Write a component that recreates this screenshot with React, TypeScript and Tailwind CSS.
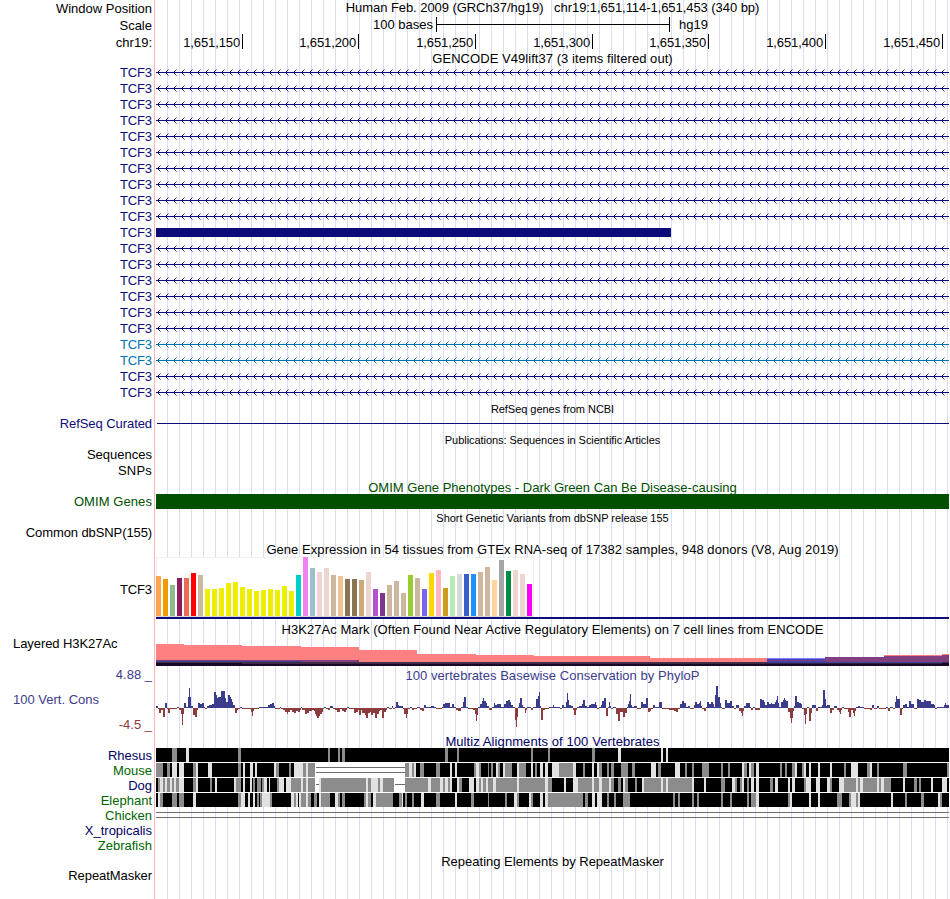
import React from "react";

type Run = [number, number, number];
type Shade = [number, number, string];

// All genomic marks are stored in thirds of a pixel, relative to each panel's own offset.
const px = (z: number) => Math.round(z / 3);

const NAVY = "#0c0c78";
const BLUE = "#3c3c8c";
const GREEN = "#005000";

const geneColors: string[] = Array.from({ length: 21 }, (_, i) =>
  i === 17 || i === 18 ? "#0072b2" : NAVY
);

const tissues: [number, string][] = [
  [108, "#ffa54f"], [117, "#ee9a00"], [135, "#8fbc8f"], [114, "#8b1c62"], [114, "#ee6a50"],
  [99, "#ff0000"], [105, "#cdb79e"], [147, "#eeee00"], [147, "#eeee00"], [144, "#eeee00"],
  [129, "#eeee00"], [126, "#eeee00"], [141, "#eeee00"], [147, "#eeee00"], [153, "#eeee00"],
  [150, "#eeee00"], [147, "#eeee00"], [150, "#eeee00"], [138, "#eeee00"], [153, "#eeee00"],
  [105, "#00cdcd"], [52, "#ee82ee"], [84, "#9ac0cd"], [96, "#eed5d2"], [84, "#eed5d2"],
  [105, "#cdb79e"], [108, "#eec591"], [117, "#8b7355"], [117, "#8b7355"], [120, "#cdaa7d"],
  [96, "#eed5d2"], [147, "#b452cd"], [159, "#7a378b"], [135, "#cdb79e"], [123, "#cdb79e"],
  [159, "#cdb79e"], [105, "#9acd32"], [114, "#cdb79e"], [147, "#7a67ee"], [99, "#ffd700"],
  [90, "#ffb6c1"], [144, "#cd9b1d"], [108, "#b4eeb4"], [102, "#d9d9d9"], [102, "#3a5fcd"],
  [102, "#1e90ff"], [96, "#cdb79e"], [81, "#cdb79e"], [120, "#ffd39b"], [60, "#a6a6a6"],
  [93, "#008b45"], [90, "#eed5d2"], [102, "#eed5d2"], [132, "#ff00ff"],
];

const phyloP: { offset: number; runs: Run[] }[] = [
  {
    offset: -18,
    runs: [
      [18,24,6],[24,27,-4],[27,33,-15],[33,39,-6],[39,45,-27],[45,51,15],[51,54,-3],[54,60,-15],[60,81,-4],[81,87,3],
      [87,93,-6],[93,96,-18],[96,99,-51],[99,102,-18],[102,108,15],[108,114,3],[114,117,33],[117,120,60],[120,123,33],
      [123,129,6],[129,135,-21],[135,141,-27],[141,144,-6],[144,150,15],[150,156,12],[156,162,15],[162,165,4],
      [165,171,-3],[171,177,6],[177,186,9],[186,192,12],[192,198,48],[198,201,39],[201,204,30],[204,213,33],
      [213,225,51],[225,228,30],[228,234,18],[234,240,39],[240,243,33],[243,246,27],[246,249,18],[249,255,9],
      [255,261,-15],[261,264,-6],[264,270,-3],[270,276,3],[276,303,-3],[303,306,-12],[306,309,-24],[309,312,-9],
      [312,327,-3],[327,354,3],[354,360,9],[360,366,12],[366,372,15],[372,375,6],[375,390,-3],[390,393,3],
      [393,399,-3],[399,405,-6],[405,411,-12],[411,414,-18],[414,420,-12],[420,426,-6],[426,432,-12],[432,438,-15],
      [438,444,-9],[444,450,-12],[450,453,-6],[453,456,3],[456,465,-6],[465,471,-18],[471,477,-15],[477,486,-9],
      [486,492,-6],[492,495,-9],[495,498,-18],[498,501,-24],[501,507,-30],[507,510,-24],[510,516,-18],[516,519,-12],
      [519,522,-3],[522,528,3],[528,534,-3],[534,540,-6],[540,549,5],[549,555,-3],[555,560,-6],[560,570,-12],
      [570,576,-4],[576,582,-9],[582,588,-12],[588,591,-6],[591,597,3],[597,612,-4],[612,618,-15],[618,624,-12],
      [624,627,-6],[627,633,-21],[633,636,-6],[636,645,-15],[645,648,-21],[648,654,-30],[654,660,-15],[660,663,-12],
      [663,669,-21],[669,675,-15],[675,681,-29],[681,687,-18],[687,690,-9],[690,696,-6],[696,702,-30],[702,708,-12],
      [708,711,-6],[711,717,3],[717,726,-3],[726,729,6],[729,735,-3],[735,738,3],[738,744,18],[744,747,9],
      [747,753,5],[753,759,6],[759,762,-3],[762,768,-18],[768,771,-30],[771,774,-18],[774,780,-4],[780,786,3],
      [786,792,-6],[792,801,-4],[801,810,3],
    ],
  },
  {
    offset: 792,
    runs: [
      [0,6,-6],[6,12,-9],[12,18,9],[18,24,3],[24,33,3],[33,42,6],[42,48,3],[48,66,-3],[66,69,3],[69,75,12],[75,90,15],
      [90,96,3],[96,102,12],[102,108,3],[108,114,-5],[114,123,-8],[123,129,3],[129,132,18],[132,138,33],[138,144,3],
      [144,150,-4],[150,159,-3],[159,165,-5],[165,168,-18],[168,171,-39],[171,174,-21],[174,180,3],[180,186,12],
      [186,189,21],[189,192,30],[192,198,21],[198,201,15],[201,207,6],[207,216,-6],[216,222,3],[222,225,15],
      [225,231,9],[231,243,12],[243,252,3],[252,258,12],[258,264,21],[264,270,24],[270,273,18],[273,279,9],
      [279,285,3],[285,288,-36],[288,291,-57],[291,294,-27],[294,297,3],[297,300,15],[300,306,30],[306,309,9],
      [309,315,4],[315,318,-15],[318,321,-6],[321,333,3],[333,339,-6],[339,348,4],[348,354,27],[354,357,36],
      [357,360,48],[360,363,6],[363,369,-36],[369,375,-6],[375,387,-3],[387,399,3],[399,402,9],[402,420,3],
      [420,426,-4],[426,432,8],[432,438,3],[438,441,18],[441,444,45],[444,447,24],[447,453,8],[453,459,6],
      [459,462,-6],[462,468,-21],[468,471,-6],[471,477,4],[477,486,6],[486,489,12],[489,495,24],[495,501,6],
      [501,507,3],[507,513,9],[513,525,12],[525,528,18],[528,531,9],[531,537,-3],[537,543,3],[543,546,9],
      [546,552,21],[552,558,30],[558,564,-24],[564,567,3],[567,570,18],[570,573,6],[573,579,-3],[579,588,3],
      [588,594,-18],[594,600,-39],[600,609,-12],[609,615,-27],[615,621,-15],[621,624,3],[624,627,12],[627,630,21],
      [630,633,42],[633,636,9],[636,642,3],[642,651,6],[651,663,-3],[663,669,18],[669,678,12],[678,684,30],
      [684,690,-12],[690,693,-8],[693,699,-3],[699,705,9],[705,711,3],[711,717,4],[717,726,18],[726,747,-3],
      [747,753,-5],[753,762,-6],[762,768,-9],[768,774,-12],[774,780,-3],[780,786,12],[786,792,21],[792,798,15],
      [798,804,3],[804,810,5],
    ],
  },
  {
    offset: 1602,
    runs: [
      [0,12,-3],[12,15,9],[15,21,18],[21,27,12],[27,30,15],[30,33,21],[33,36,6],[36,42,-3],[42,48,-9],[48,51,3],
      [51,57,18],[57,63,12],[63,69,18],[69,72,12],[72,75,3],[75,78,39],[78,84,66],[84,90,33],[90,93,15],[93,96,3],
      [96,105,-3],[105,111,24],[111,120,15],[120,126,21],[126,132,6],[132,138,-3],[138,147,9],[147,153,-9],
      [153,156,-15],[156,159,-24],[159,162,-9],[162,168,6],[168,180,15],[180,183,3],[183,189,-6],[189,195,3],
      [195,210,-6],[210,216,27],[216,222,24],[222,225,18],[225,231,9],[231,237,18],[237,243,12],[243,246,15],
      [246,255,12],[255,258,18],[258,261,24],[261,264,36],[264,267,15],[267,273,3],[273,279,18],[279,282,24],
      [282,285,30],[285,288,24],[288,294,21],[294,300,-12],[300,303,-30],[303,306,-45],[306,309,-30],[309,312,-9],
      [312,315,6],[315,318,36],[318,321,36],[321,327,18],[327,333,15],[333,336,12],[336,345,-3],[342,345,-21],
      [345,348,-48],[348,351,-18],[351,357,3],[357,363,-39],[363,366,-15],[366,378,9],[378,384,-9],[384,396,3],
      [396,399,9],[399,405,54],[405,408,27],[408,411,6],[411,420,9],[420,426,-15],[426,432,-5],[432,441,6],
      [441,447,-6],[447,450,-12],[450,453,-18],[453,456,-6],[456,462,3],[462,474,-3],[474,477,-12],[477,483,-27],
      [483,489,-6],[489,492,-15],[492,495,-24],[495,498,-9],[498,504,3],[504,510,6],[510,522,3],[522,540,-3],
      [540,546,-5],[546,552,9],[552,561,-3],[561,567,6],[567,588,-3],[588,594,3],[594,600,-8],[600,609,3],
      [609,615,-3],[615,618,18],[618,621,36],[621,630,27],[630,636,-21],[636,639,-3],[639,645,9],[645,651,12],
      [651,657,3],[657,663,21],[663,672,12],[672,681,-3],[681,687,27],[687,693,24],[693,702,18],[702,708,24],
      [708,723,21],[723,732,12],[732,735,9],[735,741,-3],[741,762,3],[762,765,9],[765,768,15],[768,777,9],
    ],
  },
];

const tone: Record<string, string> = { g: "#8c8c8c", w: "#e1e1e1", k: "#000000", b: "#ffffff" };

const alignments: { name: string; parts: { offset: number; marks: Shade[] }[] }[] = [
  {
    name: "Rhesus",
    parts: [
      { offset: -18, marks: [[66,81,"g"],[108,117,"w"],[264,273,"g"],[534,540,"g"],[564,570,"g"],[576,585,"g"]] },
      { offset: 792, marks: [[75,84,"g"],[111,117,"g"],[333,339,"g"],[384,390,"g"],[516,525,"g"],[594,603,"w"],[723,729,"w"],[738,744,"w"]] },
    ],
  },
  {
    name: "Mouse",
    parts: [
      { offset: -18, marks: [
        [18,39,"g"],[51,60,"g"],[66,81,"w"],[87,102,"w"],[129,138,"g"],[138,144,"w"],[174,186,"w"],[264,273,"g"],
        [279,285,"w"],[300,309,"w"],[315,321,"w"],[372,378,"w"],[378,387,"g"],[417,423,"g"],[432,459,"w"],[459,468,"g"],
        [468,474,"w"],[474,495,"g"],[495,765,"b"],[765,777,"g"],[777,786,"w"],[786,792,"g"],[792,798,"w"],
      ] },
      { offset: 792, marks: [
        [0,12,"g"],[48,60,"g"],[90,96,"w"],[105,111,"w"],[162,168,"g"],[168,177,"w"],[177,183,"g"],[204,207,"g"],
        [213,219,"g"],[228,234,"w"],[234,240,"g"],[249,255,"w"],[255,276,"g"],[291,297,"w"],[297,318,"g"],[333,339,"w"],
        [345,351,"g"],[360,369,"w"],[375,384,"w"],[396,417,"w"],[417,459,"g"],[459,468,"w"],[489,495,"g"],[516,522,"w"],
        [531,537,"w"],[537,546,"g"],[561,567,"g"],[573,582,"g"],[603,624,"g"],[636,645,"g"],[693,708,"w"],[714,723,"g"],
        [765,780,"w"],[795,801,"g"],
      ] },
      { offset: 1602, marks: [
        [6,12,"g"],[36,57,"g"],[93,99,"g"],[114,120,"g"],[156,162,"w"],[162,171,"g"],[177,183,"w"],[183,192,"g"],
        [198,207,"w"],[270,276,"g"],[285,291,"g"],[306,315,"g"],[315,321,"w"],[336,342,"g"],[342,348,"w"],[357,363,"w"],
        [384,390,"w"],[420,426,"w"],[462,468,"g"],[483,504,"w"],[531,540,"g"],[540,546,"w"],[561,567,"g"],[639,651,"g"],
        [771,777,"g"],
      ] },
    ],
  },
  {
    name: "Dog",
    parts: [
      { offset: -18, marks: [
        [24,30,"g"],[30,39,"w"],[39,45,"g"],[45,51,"w"],[51,60,"g"],[60,66,"w"],[66,72,"g"],[72,78,"w"],[78,87,"g"],
        [87,102,"w"],[129,138,"g"],[138,144,"w"],[180,186,"g"],[195,201,"w"],[252,258,"w"],[258,273,"g"],[279,285,"w"],
        [300,306,"w"],[309,315,"g"],[321,333,"g"],[336,342,"g"],[342,351,"w"],[357,360,"w"],[381,387,"g"],[387,402,"w"],
        [408,423,"w"],[423,453,"g"],[453,459,"w"],[459,468,"g"],[468,474,"w"],[474,495,"g"],[495,507,"b"],[507,513,"w"],
        [513,648,"g"],[648,654,"w"],[654,663,"g"],[663,684,"w"],[684,690,"g"],[690,699,"w"],[699,732,"g"],[732,765,"b"],
        [765,810,"g"],
      ] },
      { offset: 792, marks: [
        [0,24,"g"],[24,33,"w"],[33,60,"g"],[60,69,"w"],[69,75,"g"],[75,84,"w"],[84,90,"g"],[90,96,"w"],[111,117,"w"],
        [117,126,"g"],[147,162,"w"],[168,177,"w"],[177,183,"g"],[183,189,"w"],[189,198,"g"],[198,204,"w"],[204,219,"g"],
        [219,228,"w"],[228,291,"g"],[291,297,"w"],[297,375,"g"],[375,384,"w"],[384,396,"g"],[432,438,"w"],[459,474,"w"],
        [474,516,"g"],[516,522,"w"],[522,537,"g"],[537,546,"w"],[546,567,"g"],[567,573,"w"],[573,582,"g"],[594,603,"g"],
        [609,615,"w"],[615,624,"g"],[645,651,"g"],[666,672,"w"],[672,723,"g"],[723,729,"w"],[729,738,"g"],[738,744,"w"],
        [744,810,"g"],
      ] },
      { offset: 1602, marks: [
        [0,6,"g"],[6,12,"w"],[42,48,"w"],[93,105,"g"],[126,135,"w"],[135,141,"g"],[150,156,"g"],[156,162,"w"],
        [171,177,"g"],[183,192,"w"],[198,207,"w"],[240,249,"g"],[255,264,"w"],[294,300,"w"],[306,315,"w"],[342,348,"g"],
        [348,363,"w"],[378,390,"w"],[411,420,"w"],[420,426,"g"],[447,462,"w"],[462,498,"g"],[498,504,"w"],[504,510,"g"],
        [510,519,"w"],[519,561,"g"],[561,567,"w"],[567,573,"g"],[573,582,"w"],[582,603,"g"],[639,645,"w"],[672,681,"g"],
        [687,693,"g"],[723,729,"w"],[756,771,"w"],
      ] },
    ],
  },
  {
    name: "Elephant",
    parts: [
      { offset: -18, marks: [
        [24,30,"w"],[30,39,"g"],[66,81,"g"],[87,102,"g"],[129,138,"w"],[264,273,"g"],[273,285,"w"],[294,300,"w"],
        [309,315,"w"],[321,327,"g"],[330,336,"g"],[336,360,"w"],[360,366,"g"],[423,432,"w"],[432,438,"g"],[438,444,"w"],[447,453,"w"],
        [453,468,"g"],[468,474,"w"],[474,483,"g"],[492,500,"g"],[507,513,"w"],[513,540,"g"],[555,564,"w"],[564,570,"g"],
        [576,585,"g"],[642,648,"g"],[648,654,"w"],[654,663,"g"],[669,678,"w"],[678,729,"g"],[747,756,"g"],[756,759,"w"],
        [765,771,"g"],[786,792,"g"],
      ] },
      { offset: 792, marks: [
        [3,12,"w"],[48,60,"g"],[105,111,"w"],[153,162,"g"],[204,207,"g"],[255,261,"g"],[282,291,"w"],[291,297,"g"],
        [327,333,"w"],[333,339,"g"],[360,369,"w"],[375,384,"w"],[384,489,"g"],[495,504,"g"],[516,525,"w"],[531,537,"w"],
        [537,546,"w"],[561,567,"g"],[582,588,"g"],[609,630,"g"],[759,765,"g"],[774,780,"g"],
      ] },
      { offset: 1602, marks: [
        [6,12,"g"],[21,27,"g"],[93,99,"g"],[120,126,"g"],[171,177,"g"],[183,198,"g"],[198,207,"w"],[294,300,"g"],
        [300,306,"w"],[357,363,"w"],[384,390,"w"],[441,456,"g"],[477,483,"g"],[483,498,"w"],[498,504,"g"],[504,510,"w"],
        [603,609,"w"],[645,651,"g"],[693,702,"g"],[744,750,"w"],[750,756,"g"],
      ] },
    ],
  },
];

// [x, y, width, height, fill] inside the 793x30 histone panel
const histone: [number, number, number, number, string][] = [
  [0, 7, 28, 18, "#ff8080"], [28, 8, 58, 17, "#ff8080"], [86, 9, 59, 16, "#ff8080"],
  [145, 10, 58, 15, "#ff8080"], [203, 13, 58, 12, "#ff8080"], [261, 17, 59, 8, "#ff8080"],
  [320, 18, 58, 7, "#ff8080"], [378, 19, 116, 6, "#ff8080"], [494, 21, 117, 4, "#ff8080"],
  [611, 21, 58, 1, "#8080ff"], [611, 22, 58, 1, "#4040c0"], [611, 23, 58, 2, "#804080"],
  [669, 20, 59, 5, "#804080"], [728, 18, 58, 1, "#ff8080"], [728, 19, 58, 6, "#804080"],
  [786, 17, 7, 1, "#ff8080"], [786, 18, 7, 7, "#804080"],
  [0, 23, 203, 1, "#804080"], [0, 24, 145, 1, "#404090"], [145, 24, 58, 1, "#804080"],
  [0, 25, 793, 1, "#403050"], [611, 24, 58, 2, "#4040a0"], [669, 25, 117, 1, "#404090"],
  [0, 26, 793, 3, "#180828"], [86, 26, 525, 1, "#402840"], [611, 26, 175, 1, "#302040"],
];

type TextRow = { text: string; h: string; color?: string; ls?: string };

// Even top padding nudges the centred line down by half of it.
function Label({ text, h, color = "#000000", left = false, ls = "", drop = "pt-0" }: TextRow & { left?: boolean; drop?: string }) {
  return (
    <div className={`${h} ${ls} ${drop} flex items-center whitespace-pre ${left ? "pl-[13px]" : "justify-end pr-[2px]"}`} style={{ color }}>
      {text}
    </div>
  );
}

function Title({ text, h, color = "#000000", small = false, ls = "", drop = "pt-0" }: TextRow & { small?: boolean; drop?: string }) {
  return (
    <div className={`${h} ${small ? "text-[11px]" : ""} ${ls} ${drop} flex items-center justify-center whitespace-pre`} style={{ color }}>
      {text}
    </div>
  );
}

function GeneRows() {
  const arrows = Array.from({ length: 99 }, (_, i) => 1 + i * 8);
  const dots = (y: number, d: number) =>
    arrows.map((x) => `M${x + d} ${y - d}h1v1h-1zM${x + d} ${y + d}h1v1h-1z`).join("");
  return (
    <svg width="793" height="336" className="block" shapeRendering="crispEdges">
      {geneColors.map((c, r) => {
        const y = r * 16 + 8;
        if (r === 10) return <rect key={r} x="0" y={y - 4} width="515" height="9" fill={c} />;
        return (
          <g key={r} fill={c}>
            <rect x="0" y={y} width="793" height="1" />
            <path d={dots(y, 1)} />
            <path d={dots(y, 2)} fillOpacity="0.85" />
            <path d={dots(y, 3)} fillOpacity="0.5" />
          </g>
        );
      })}
    </svg>
  );
}

function Expression() {
  return (
    <svg width="793" height="64" className="block" shapeRendering="crispEdges">
      <rect x="0" y="0" width="378" height="60" fill="#f0f0f0" />
      <rect x="1" y="1" width="376" height="58" fill="#ffffff" />
      {tissues.map(([top, fill], i) => {
        const y = Math.round(top / 3) - 17;
        return <rect key={i} x={i * 7} y={y} width="5" height={59 - y} fill={fill} />;
      })}
      <rect x="0" y="59" width="377" height="1" fill="#d8d8d8" />
      <rect x="0" y="60" width="793" height="2" fill={NAVY} />
    </svg>
  );
}

function Conservation() {
  return (
    <svg width="793" height="50" className="block" shapeRendering="crispEdges">
      {phyloP.map(({ offset, runs }) =>
        runs.map(([a, b, v], i) => {
          const x = px(a + offset);
          const h = Math.max(1, px(Math.abs(v)));
          return (
            <rect key={`${offset}-${i}`} x={x} y={v > 0 ? 25 - h : 25} width={px(b + offset) - x} height={h} fill={v > 0 ? BLUE : "#8c3c3c"} />
          );
        })
      )}
    </svg>
  );
}

function Alignments() {
  return (
    <svg width="793" height="72" className="block" shapeRendering="crispEdges">
      <rect x="0" y="0" width="793" height="59" fill="#ffffff" />
      {alignments.map(({ name, parts }, r) => (
        <g key={name}>
          <rect x="0" y={r * 15} width="793" height="14" fill="#000000" />
          {parts.map(({ offset, marks }) =>
            marks.map(([a, b, c], i) => {
              const x = px(a + offset);
              return <rect key={`${offset}-${i}`} x={x} y={r * 15} width={px(b + offset) - x} height="14" fill={tone[c]} />;
            })
          )}
        </g>
      ))}
      <g fill="#6e6e6e">
        <rect x="160" y="19" width="89" height="1" />
        <rect x="160" y="24" width="89" height="1" />
        <rect x="160" y="36" width="3" height="1" />
        <rect x="239" y="36" width="10" height="1" />
        <rect x="0" y="64" width="793" height="1" />
        <rect x="0" y="69" width="793" height="1" />
      </g>
    </svg>
  );
}

const ticks: [string, string][] = [
  ["1,651,150", "w-[87px]"],
  ["1,651,200", "w-[116px]"],
  ["1,651,250", "w-[117px]"],
  ["1,651,300", "w-[117px]"],
  ["1,651,350", "w-[116px]"],
  ["1,651,400", "w-[117px]"],
  ["1,651,450", "w-[117px]"],
];

export default function App() {
  return (
    <main className="flex h-[899px] w-[950px] overflow-hidden bg-white font-['Liberation_Sans',Arial,sans-serif] text-[13px] leading-[16px] text-black">
      <aside className="w-[154px] shrink-0">
        <Label text="Window Position" h="h-[17px]" />
        <Label text="Scale" h="h-[17px]" />
        <Label text="chr19:" h="h-[17px]" />
        <div className="pt-[13px]">
          {geneColors.map((c, i) => (
            <Label key={i} text="TCF3" h="h-4" color={c} drop="pt-[2px]" ls="tracking-[-0.1px]" />
          ))}
        </div>
        <div className="h-[15px]" />
        <Label text="RefSeq Curated" h="h-4" color={NAVY} drop="pt-[2px]" ls="tracking-[-0.07px]" />
        <div className="h-[15px]" />
        <Label text="Sequences" h="h-4" drop="pt-[2px]" />
        <Label text="SNPs" h="h-4" drop="pt-[2px]" ls="tracking-[0.2px]" />
        <div className="h-[15px]" />
        <Label text="OMIM Genes" h="h-4" color={GREEN} drop="pt-[2px]" ls="tracking-[0.08px]" />
        <div className="h-[15px]" />
        <Label text="Common dbSNP(155)" h="h-4" drop="pt-[2px]" ls="tracking-[-0.1px]" />
        <div className="h-[41px]" />
        <Label text="TCF3" h="h-4" drop="pt-[2px]" ls="tracking-[-0.1px]" />
        <div className="h-[38px]" />
        <Label text="Layered H3K27Ac" h="h-4" left drop="pt-[2px]" ls="tracking-[-0.07px]" />
        <div className="h-4" />
        <Label text="4.88 _" h="h-4" color={BLUE} />
        <div className="h-2" />
        <Label text="100 Vert. Cons" h="h-4" color={BLUE} left drop="pt-[2px]" />
        <div className="h-[10px]" />
        <Label text="-4.5 _" h="h-4" color="#8c3c3c" />
        <div className="h-[15px]" />
        <Label text="Rhesus" h="h-[15px]" color="#000064" />
        <Label text="Mouse" h="h-[15px]" color="#006400" />
        <Label text="Dog" h="h-[15px]" color="#000064" />
        <Label text="Elephant" h="h-[15px]" color="#006400" />
        <Label text="Chicken" h="h-[15px]" color="#006400" />
        <Label text="X_tropicalis" h="h-[15px]" color="#000064" />
        <Label text="Zebrafish" h="h-[15px]" color="#006400" />
        <div className="h-[14px]" />
        <Label text="RepeatMasker" h="h-4" drop="pt-[2px]" ls="tracking-[-0.07px]" />
      </aside>

      <div className="border-l border-[#ffb4b4] pl-px">
        <section className="h-full w-[793px] bg-[repeating-linear-gradient(to_right,transparent_0px,transparent_11px,#dcdcf5_11px,#dcdcf5_12px)]">
          <Title text="Human Feb. 2009 (GRCh37/hg19)   chr19:1,651,114-1,651,453 (340 bp)" h="h-4" ls="tracking-[-0.06px]" />
          <div className="flex h-[17px] items-center">
            <div className="w-[277px] text-right">100 bases</div>
            <div className="ml-[3px] flex h-[15px] w-[234px] items-center border-x border-black">
              <div className="h-px w-full bg-black" />
            </div>
            <div className="ml-[9px]">hg19</div>
          </div>
          <div className="flex h-[17px] pt-px">
            {ticks.map(([t, w]) => (
              <div key={t} className={`${w} h-[15px] shrink-0 border-r border-black pr-[2px] text-right leading-[17px] tracking-[-0.12px]`}>
                {t}
              </div>
            ))}
          </div>
          <Title text="GENCODE V49lift37 (3 items filtered out)" h="h-[14px]" drop="pt-[4px]" ls="tracking-[0.05px]" />
          <GeneRows />
          <Title text="RefSeq genes from NCBI" h="h-[18px]" small ls="tracking-[-0.04px]" />
          <div className="h-[14px] pt-[5px] pl-px">
            <div className="h-px bg-[#0c0c78]" />
          </div>
          <Title text="Publications: Sequences in Scientific Articles" h="h-4" small ls="tracking-[-0.05px]" />
          <div className="h-[31px]" />
          <Title text="OMIM Gene Phenotypes - Dark Green Can Be Disease-causing" h="h-[15px]" color={GREEN} drop="pt-[2px]" />
          <div className="h-[15px] bg-[#005000]" />
          <Title text="Short Genetic Variants from dbSNP release 155" h="h-[18px]" small ls="tracking-[-0.02px]" />
          <div className="h-[14px]" />
          <Title text="Gene Expression in 54 tissues from GTEx RNA-seq of 17382 samples, 948 donors (V8, Aug 2019)" h="h-4" drop="pt-[2px]" ls="tracking-[0.055px]" />
          <Expression />
          <Title text="H3K27Ac Mark (Often Found Near Active Regulatory Elements) on 7 cell lines from ENCODE" h="h-4" drop="pt-[2px]" ls="tracking-[0.05px]" />
          <svg width="793" height="30" className="block" shapeRendering="crispEdges">
            {histone.map(([x, y, w, h, fill], i) => (
              <rect key={i} x={x} y={y} width={w} height={h} fill={fill} />
            ))}
          </svg>
          <Title text="100 vertebrates Basewise Conservation by PhyloP" h="h-4" color={BLUE} drop="pt-[2px]" ls="tracking-[0.04px]" />
          <Conservation />
          <Title text="Multiz Alignments of 100 Vertebrates" h="h-[15px]" color="#000064" drop="pt-[2px]" ls="tracking-[0.09px]" />
          <Alignments />
          <div className="h-[33px]" />
          <Title text="Repeating Elements by RepeatMasker" h="h-4" drop="pt-[2px]" />
        </section>
      </div>
    </main>
  );
}
